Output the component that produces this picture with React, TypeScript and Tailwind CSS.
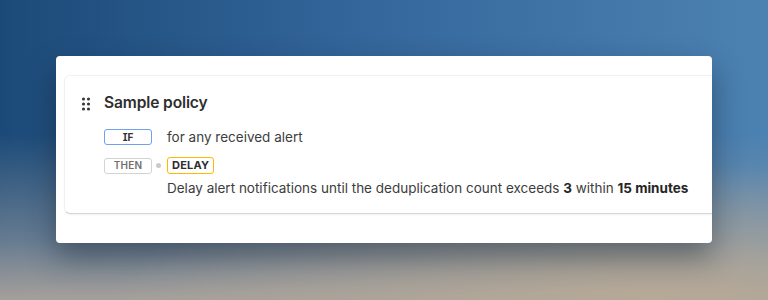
import React from "react";

function DragHandle() {
  return (
    <svg width="12" height="14" viewBox="0 0 12 14" className="text-[#3a3a3a]">
      {[2, 7, 12].map((y) =>
        [3.5, 8.5].map((x) => (
          <circle key={`${x}-${y}`} cx={x} cy={y} r="1.6" fill="currentColor" />
        ))
      )}
    </svg>
  );
}

export default function App() {
  return (
    <div
      className="w-[768px] h-[300px] overflow-hidden pt-[56px] pl-[56px] [background:radial-gradient(ellipse_70%_45%_at_85%_100%,rgba(185,170,150,0.9)_0%,rgba(185,170,150,0)_100%),linear-gradient(180deg,rgba(150,158,165,0)_45%,rgba(150,155,160,0.6)_80%,rgba(165,160,155,1)_100%),linear-gradient(90deg,#1c4a78_0%,#33659a_45%,#4c82b2_100%)]"
      style={{ fontFamily: "Inter, 'Noto Sans', sans-serif" }}
    >
      <div className="w-[656px] h-[187px] bg-white rounded-[4px] overflow-hidden pt-[19px] pl-[8px] shadow-[0_14px_30px_rgba(20,30,45,0.45)]">
        <div className="w-[700px] h-[139px] rounded-[6px] border border-[#f1f1f1] border-b-[#d6d6d6] shadow-[0_1px_2px_rgba(0,0,0,0.06)] pt-[16px] pl-[14px] flex">
          <div className="w-[25px] pt-[5px] pl-[1px]">
            <DragHandle />
          </div>
          <div className="flex flex-col">
            <div className="text-[15.6px] leading-[22px] font-semibold text-[#2e2e2e] tracking-[-0.15px]">
              Sample policy
            </div>
            <div className="grid grid-cols-[48px_15px_1fr] items-center mt-[13px]">
              <div className="h-[16px] rounded-[3px] border border-[#6ea2ef] flex items-center justify-center text-[10px] font-bold text-[#333] [font-feature-settings:'cv08']">
                IF
              </div>
              <div />
              <div className="text-[13.5px] leading-[20px] text-[#3d3d3d]">
                for any received alert
              </div>
            </div>
            <div className="grid grid-cols-[48px_15px_1fr] items-center mt-[10px]">
              <div className="h-[16px] rounded-[3px] border border-[#d3d3d3] flex items-center justify-center text-[10px] font-semibold text-[#707070] tracking-[0.2px]">
                THEN
              </div>
              <div className="flex justify-center pr-[3px]">
                <div className="w-[5px] h-[5px] rounded-full bg-[#cacaca]" />
              </div>
              <div className="flex">
                <span className="inline-flex h-[17px] px-[4px] rounded-[3px] border border-solid border-amber-400 bg-white items-center text-[11px] font-bold text-[#2e2e2e] tracking-[0.2px]">
                  DELAY
                </span>
              </div>
            </div>
            <div className="grid grid-cols-[48px_15px_1fr] mt-[4px]">
              <div />
              <div />
              <div className="text-[13.5px] leading-[20px] text-[#3d3d3d] whitespace-nowrap">
                Delay alert notifications until the deduplication count exceeds{" "}
                <span className="font-bold text-[#262626]">3</span> within{" "}
                <span className="font-bold text-[#262626]">15 minutes</span>
              </div>
            </div>
          </div>
        </div>
      </div>
    </div>
  );
}
